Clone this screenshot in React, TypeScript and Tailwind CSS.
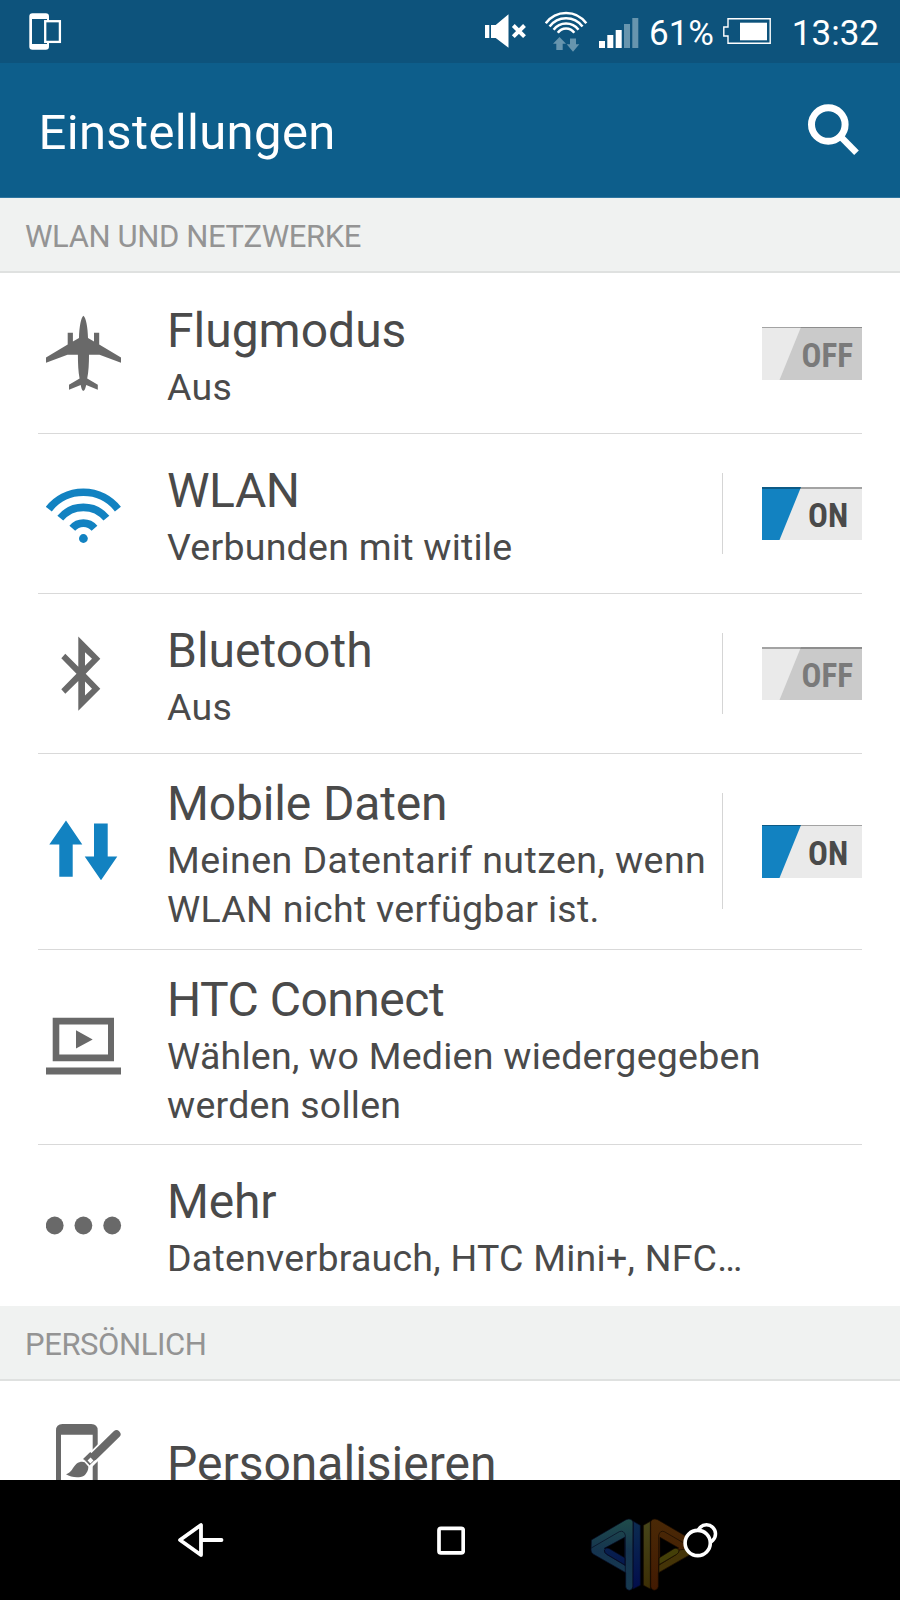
import { ReactNode } from 'react';
import clsx from 'clsx';

interface SettingRow {
  title: string;
  /** One entry per line */
  lines: string[];
  icon: ReactNode;
  /** Leave out for rows without a switch */
  on?: boolean;
  /** Vertical rule in front of the switch */
  split?: boolean;
  rowClass: string;
  textClass: string;
  titleClass?: string;
  lineClass?: string;
}

/* ---------- Row icons, all on a 76px box ---------- */

function RowIcon({ children, blue }: { children: ReactNode; blue?: boolean }) {
  return (
    <svg
      viewBox="0 0 76 76"
      className={clsx('size-[76px] shrink-0', blue ? 'text-[#1282c1]' : 'text-[#696969]')}
      fill="currentColor"
      aria-hidden
    >
      {children}
    </svg>
  );
}

const PlaneIcon = (
  <RowIcon>
    <path
      transform="translate(0 .8)"
      d="M37.4 0C39.8 1.5 41.8 11 42 22.3L48 25.8V17H53.2V28.8L75 41.7V47L53.5 38.9H43C43 48 42.6 56 41.2 62.8L51.8 69V74L40.2 69.2C39.6 72 38.7 75 37.4 75C36.1 75 35.2 72 34.7 69.2L23 74V69L33.6 62.8C32.3 56 31.9 48 31.9 38.9H21.5L0 47V41.7L21.7 28.8V17H26.9V25.8L33 22.3C33.2 11 35.1 1.5 37.4 0Z"
    />
  </RowIcon>
);

const WifiIcon = (
  <RowIcon blue>
    <g fill="none" stroke="currentColor" strokeWidth="7.6">
      <path d="M2.8 33.1A43.8 43.8 0 0 1 71.9 33.1" />
      <path d="M14.3 42.2A29.9 29.9 0 0 1 60.4 42.2" />
      <path d="M26.3 52.2A14.6 14.6 0 0 1 48.5 52.2" />
    </g>
    <circle cx="37.4" cy="62.5" r="4.4" />
  </RowIcon>
);

const BluetoothIcon = (
  <RowIcon>
    <path
      fillRule="evenodd"
      d="M32.3 .5L54.3 22.8L39.7 37.8L54.3 52.8L32.3 74.8V45L19.3 57.8L15.3 53.3L30.5 37.8L15.3 22.3L19.3 17.7L32.3 30.7ZM39 16.2V29.8L46 22.8ZM39 45.5V59.5L46 52.8Z"
    />
  </RowIcon>
);

const DataIcon = (
  <RowIcon blue>
    <path d="M20 7.5L36.3 31.5H26.7V63.8H13.3V31.5H3.3ZM48 10.5H61.7V43.5H71.3L55 67.2L38.7 43.5H48Z" />
  </RowIcon>
);

const ConnectIcon = (
  <RowIcon>
    <path fillRule="evenodd" d="M6.7 8.7H68V52.2H6.7ZM13.3 15.5V45.5H62V15.5Z" />
    <path d="M30 21.2L46.7 30.5L30 39.5ZM0 58.5H75V65.4H0Z" />
  </RowIcon>
);

const MoreIcon = (
  <RowIcon>
    <circle cx="8.7" cy="37.5" r="8.9" />
    <circle cx="37.4" cy="37.5" r="8.9" />
    <circle cx="66.2" cy="37.5" r="8.9" />
  </RowIcon>
);

const PersonalizeIcon = (
  <RowIcon>
    <path fillRule="evenodd" d="M10 7.5Q10 1 16.5 1H45.2Q51.7 1 51.7 7.5V74H10ZM15 11.7V70H46.7V11.7Z" />
    <path d="M70.5 11.2L39 42.5" stroke="#fff" strokeWidth="12" strokeLinecap="round" />
    <path d="M70.5 11.2L47.8 33.3" stroke="currentColor" strokeWidth="8" strokeLinecap="round" />
    <path d="M47.4 32.3L40.2 39.3" stroke="currentColor" strokeWidth="9" />
    <path d="M46 36L43 39" stroke="#fff" strokeWidth="4" />
    <path d="M37.8 36.5L43.5 42.5" stroke="#fff" strokeWidth="0.8" />
    <path d="M20 51.3C25.5 50 26.5 44.5 30.5 40.8C33.5 38.6 36.5 38.4 38.6 39.3L42.3 43.5C42.6 47 40.5 50.7 38 52.8C33 55.5 25 54.5 20 51.3Z" />
  </RowIcon>
);

/* ---------- Data ---------- */

const networkRows: SettingRow[] = [
  {
    title: 'Flugmodus',
    lines: ['Aus'],
    icon: PlaneIcon,
    on: false,
    rowClass: 'h-[161px] border-b',
    textClass: 'pt-[25px]',
  },
  {
    title: 'WLAN',
    lines: ['Verbunden mit witile'],
    icon: WifiIcon,
    on: true,
    split: true,
    rowClass: 'h-[160px] border-b',
    textClass: 'pt-[24px]',
    titleClass: 'tracking-[-0.5px]',
  },
  {
    title: 'Bluetooth',
    lines: ['Aus'],
    icon: BluetoothIcon,
    on: false,
    split: true,
    rowClass: 'h-[160px] border-b',
    textClass: 'pt-[24px]',
  },
  {
    title: 'Mobile Daten',
    lines: ['Meinen Datentarif nutzen, wenn', 'WLAN nicht verfügbar ist.'],
    icon: DataIcon,
    on: true,
    split: true,
    rowClass: 'h-[196px] border-b pb-px',
    textClass: 'pt-[17px]',
    titleClass: 'tracking-[-0.15px]',
    lineClass: 'tracking-[0.28px] first-of-type:tracking-[0.45px]',
  },
  {
    title: 'HTC Connect',
    lines: ['Wählen, wo Medien wiedergegeben', 'werden sollen'],
    icon: ConnectIcon,
    rowClass: 'h-[195px] border-b',
    textClass: 'pt-[17px]',
    titleClass: 'tracking-[-0.5px]',
  },
  {
    title: 'Mehr',
    lines: ['Datenverbrauch, HTC Mini+, NFC…'],
    icon: MoreIcon,
    rowClass: 'h-[161px]',
    textClass: 'pt-[24px]',
    titleClass: 'tracking-[-0.2px]',
  },
];

const personalRow: SettingRow = {
  title: 'Personalisieren',
  lines: [],
  icon: PersonalizeIcon,
  rowClass: 'h-[160px]',
  textClass: 'pt-[50px]',
};

/* ---------- Parts ---------- */

function StatusBar() {
  return (
    <div className="flex h-[63px] shrink-0 items-center bg-[#0d537c] pr-[21px] pb-px pl-[29px] text-[35px] leading-none text-white">
      <svg width="33" height="37" viewBox="0 0 33 37" className="mr-auto" aria-hidden>
        <path
          fill="#fff"
          fillRule="evenodd"
          d="M3.5 .3H16.8Q20 .3 20 3.5V33.5Q20 36.7 16.8 36.7H3.5Q.3 36.7 .3 33.5V3.5Q.3 .3 3.5 .3ZM3 6V31H18V6Z"
        />
        <rect x="16.2" y="8.2" width="14.7" height="20.7" fill="#0d537c" stroke="#fff" strokeWidth="2.3" />
      </svg>

      {/* Muted speaker */}
      <svg width="42" height="34" viewBox="0 0 42 34" aria-hidden>
        <path fill="#fff" d="M0 11H4.3V24H0ZM6 11H10.7L23.5 .3V33.8L10.7 24H6Z" />
        <path d="M28.3 11.5L39.5 22.7M39.5 11.5L28.3 22.7" stroke="#fff" strokeWidth="4" />
      </svg>

      {/* WLAN with traffic arrows */}
      <svg width="43" height="43" viewBox="0 0 43 43" className="ml-[18px]" aria-hidden>
        <g fill="none" stroke="#fff" strokeWidth="2.5">
          <path d="M.8 13.3A24.9 24.9 0 0 1 41.3 13.3" />
          <path d="M4.6 16.6A20.4 20.4 0 0 1 37.5 16.6" />
          <path d="M8.6 19.7A15.6 15.6 0 0 1 33.5 19.7" />
          <path d="M12.8 22.8A10 10 0 0 1 29.3 22.8" />
        </g>
        <path
          fill="#6795ae"
          d="M14.5 27L21 33.8H17.7V40H11.3V33.8H8ZM25 28.5H31V34.2H34.3L28 41.8L21.7 34.2H25Z"
        />
      </svg>

      {/* Signal strength */}
      <svg width="40" height="31" viewBox="0 0 40 31" className="mt-[3px] ml-[11px]" aria-hidden>
        <path fill="#fff" d="M0 24H6V31H0ZM8.3 18H14.3V31H8.3ZM16.7 13H22.7V31H16.7Z" />
        <path fill="#6795ae" d="M25 7H31V31H25ZM33.3 1H39.3V31H33.3Z" />
      </svg>

      <span className="ml-[10px] w-[74px] pt-[5px]">61%</span>

      <svg width="48" height="26" viewBox="0 0 48 26" aria-hidden>
        <path d="M5 .8H47.2V25.2H5V18H.8V9H5Z" fill="none" stroke="#fff" strokeWidth="1.4" />
        <path fill="#fff" d="M17 4.7H44V22.3H17Z" />
      </svg>

      <span className="ml-[18px] w-[90px] shrink-0 pt-[5px] text-right">13:32</span>
    </div>
  );
}

function Switch({ on }: { on: boolean }) {
  return (
    <button
      type="button"
      role="switch"
      aria-checked={on}
      className={clsx(
        'relative flex h-[53px] w-[100px] shrink-0 items-center',
        on ? 'bg-[#eaeaea] pl-[46px] text-[#4a4a4a]' : 'bg-[#cacaca] pl-[39.5px] text-[#7a7a7a]'
      )}
    >
      <svg viewBox="0 0 39 53" className="absolute top-0 left-0 h-[53px] w-[39px]" aria-hidden>
        <path d="M0 0H39L17.5 53H0Z" fill={on ? '#1282c1' : '#eaeaea'} />
      </svg>
      {/* Inset shade along the top edge */}
      <span className="absolute inset-x-0 top-0 h-[1.5px] bg-black/30" />
      <span className="pt-[4px] font-['Roboto_Condensed','Roboto',sans-serif] text-[33px] leading-none font-bold">
        {on ? 'ON' : 'OFF'}
      </span>
    </button>
  );
}

function Row({ row }: { row: SettingRow }) {
  return (
    <div className={clsx('mx-[38px] flex shrink-0 items-center border-[#d9d9d9] pl-2', row.rowClass)}>
      {row.icon}
      <div className={clsx('ml-[45px] w-[555px] self-start whitespace-nowrap text-[#4a4a4a]', row.textClass)}>
        <h3 className={clsx('text-[48px] leading-[65px]', row.titleClass)}>{row.title}</h3>
        {row.lines.map((line) => (
          <p key={line} className={clsx('text-[37.5px] leading-[48.7px]', row.lineClass ?? 'tracking-[0.25px]')}>
            {line}
          </p>
        ))}
      </div>
      {row.split && <div className="my-[39px] w-px shrink-0 self-stretch bg-[#d5d5d5]" />}
      {row.on !== undefined && (
        <div className="ml-auto">
          <Switch on={row.on} />
        </div>
      )}
    </div>
  );
}

function SectionHeader({ children }: { children: ReactNode }) {
  return (
    <h2 className="flex h-[75px] shrink-0 items-center border-b-2 border-[#dfe1e0] bg-[#f0f2f1] pt-[4px] pl-[25px] text-[31px] leading-none tracking-[-0.4px] text-[#949494]">
      {children}
    </h2>
  );
}

function Watermark() {
  return (
    <svg viewBox="120 144 312 220" className="absolute top-[38px] left-[590px] h-[73.3px] w-[104px]" aria-hidden>
      <defs>
        <linearGradient id="wm-teal" x1="0" y1="0" x2="0" y2="1">
          <stop offset="0" stopColor="#1f4c4a" />
          <stop offset="0.45" stopColor="#15344f" />
          <stop offset="1" stopColor="#173a50" />
        </linearGradient>
        <linearGradient id="wm-navy" x1="0" y1="0" x2="0" y2="1">
          <stop offset="0" stopColor="#0c2c50" />
          <stop offset="1" stopColor="#020d4c" />
        </linearGradient>
        <linearGradient id="wm-olive" x1="0" y1="0" x2="0" y2="1">
          <stop offset="0" stopColor="#46451a" />
          <stop offset="1" stopColor="#3c2e05" />
        </linearGradient>
        <linearGradient id="wm-brown" x1="0" y1="0" x2="0" y2="1">
          <stop offset="0" stopColor="#4a2906" />
          <stop offset="1" stopColor="#421a02" />
        </linearGradient>
      </defs>
      <g stroke="#06091f" strokeWidth="2">
        <path
          fill="url(#wm-teal)"
          d="M124 210L228 149Q244 143 249 155V350Q247 360 238 361Q228 360 227 350V308L129 252Q123 248 123 240Z"
        />
        <path fill="#000" d="M163 235L224 202V273L182 248Z" />
        <path
          fill="url(#wm-navy)"
          d="M250 154L271 166V346L249 357ZM163 240Q168 231 178 236L225 264V286L170 253Q162 248 163 240Z"
        />
        <path fill="none" d="M124 234L208 185Q222 180 226 196V308M163 240Q163 248 170 253L226 286" />
      </g>
      <g stroke="#140900" strokeWidth="2">
        <path fill="url(#wm-olive)" d="M301 154L280 166V346L301 357Z" />
        <path
          fill="url(#wm-brown)"
          d="M427 210L323 149Q307 143 302 155V350Q304 360 313 361Q323 360 325 350V308L424 252Q430 248 430 240V210Z"
        />
        <path fill="#443407" d="M326 286L380 253Q388 247 387 240L430 234V244Q428 250 422 253L326 308Z" />
        <path fill="#000" d="M330 202L386 234L330 268Z" />
        <path fill="#443f08" d="M327 264L372 236Q383 232 387 242Q387 249 380 253L327 284Z" />
        <path fill="none" d="M427 234L343 185Q330 180 326 196V308" />
      </g>
    </svg>
  );
}

function NavBar() {
  return (
    <div className="relative h-[120px] shrink-0 bg-black">
      <Watermark />
      <div className="relative flex h-full items-center justify-between pr-[182px] pl-[177px]">
        <svg
          width="47"
          height="36"
          viewBox="0 0 47 36"
          fill="none"
          stroke="#fff"
          strokeWidth="3.8"
          strokeLinecap="round"
          strokeLinejoin="round"
          aria-hidden
        >
          <path d="M24 3V33L3 18ZM25 18H44.5" />
        </svg>
        <svg
          width="28"
          height="29"
          viewBox="0 0 28 29"
          className="mr-[6px]"
          fill="none"
          stroke="#fff"
          strokeWidth="3.7"
          aria-hidden
        >
          <rect x="2" y="2.3" width="24.2" height="24.6" rx="2" />
        </svg>
        <svg width="35" height="36" viewBox="0 0 35 36" fill="none" stroke="#fff" aria-hidden>
          <circle cx="23.5" cy="11.8" r="9" strokeWidth="3.5" />
          <circle cx="14.7" cy="21" r="12.6" fill="#000" strokeWidth="3.6" />
        </svg>
      </div>
    </div>
  );
}

export default function App() {
  return (
    <div className="flex h-[1600px] w-[900px] flex-col overflow-hidden bg-white font-['Roboto',sans-serif]">
      <StatusBar />

      <header className="flex h-[135px] shrink-0 items-center justify-between border-b border-[#2f76a0] bg-[#0d5e8b] pr-[41px] pl-[38.5px] text-white">
        <h1 className="pt-[5px] text-[49px] leading-none tracking-[0.35px]">Einstellungen</h1>
        <svg width="51" height="52" viewBox="0 0 51 52" fill="none" stroke="#fff" aria-hidden>
          <circle cx="20.3" cy="20.5" r="16.8" strokeWidth="7" />
          <path d="M32.5 32.5L48.5 48.8" strokeWidth="6.5" />
        </svg>
      </header>

      <SectionHeader>WLAN UND NETZWERKE</SectionHeader>
      {networkRows.map((row) => (
        <Row key={row.title} row={row} />
      ))}

      <SectionHeader>PERSÖNLICH</SectionHeader>
      {/* Scrolled halfway under the navigation bar */}
      <div className="h-[99px] shrink-0 overflow-hidden">
        <Row row={personalRow} />
      </div>

      <NavBar />
    </div>
  );
}
